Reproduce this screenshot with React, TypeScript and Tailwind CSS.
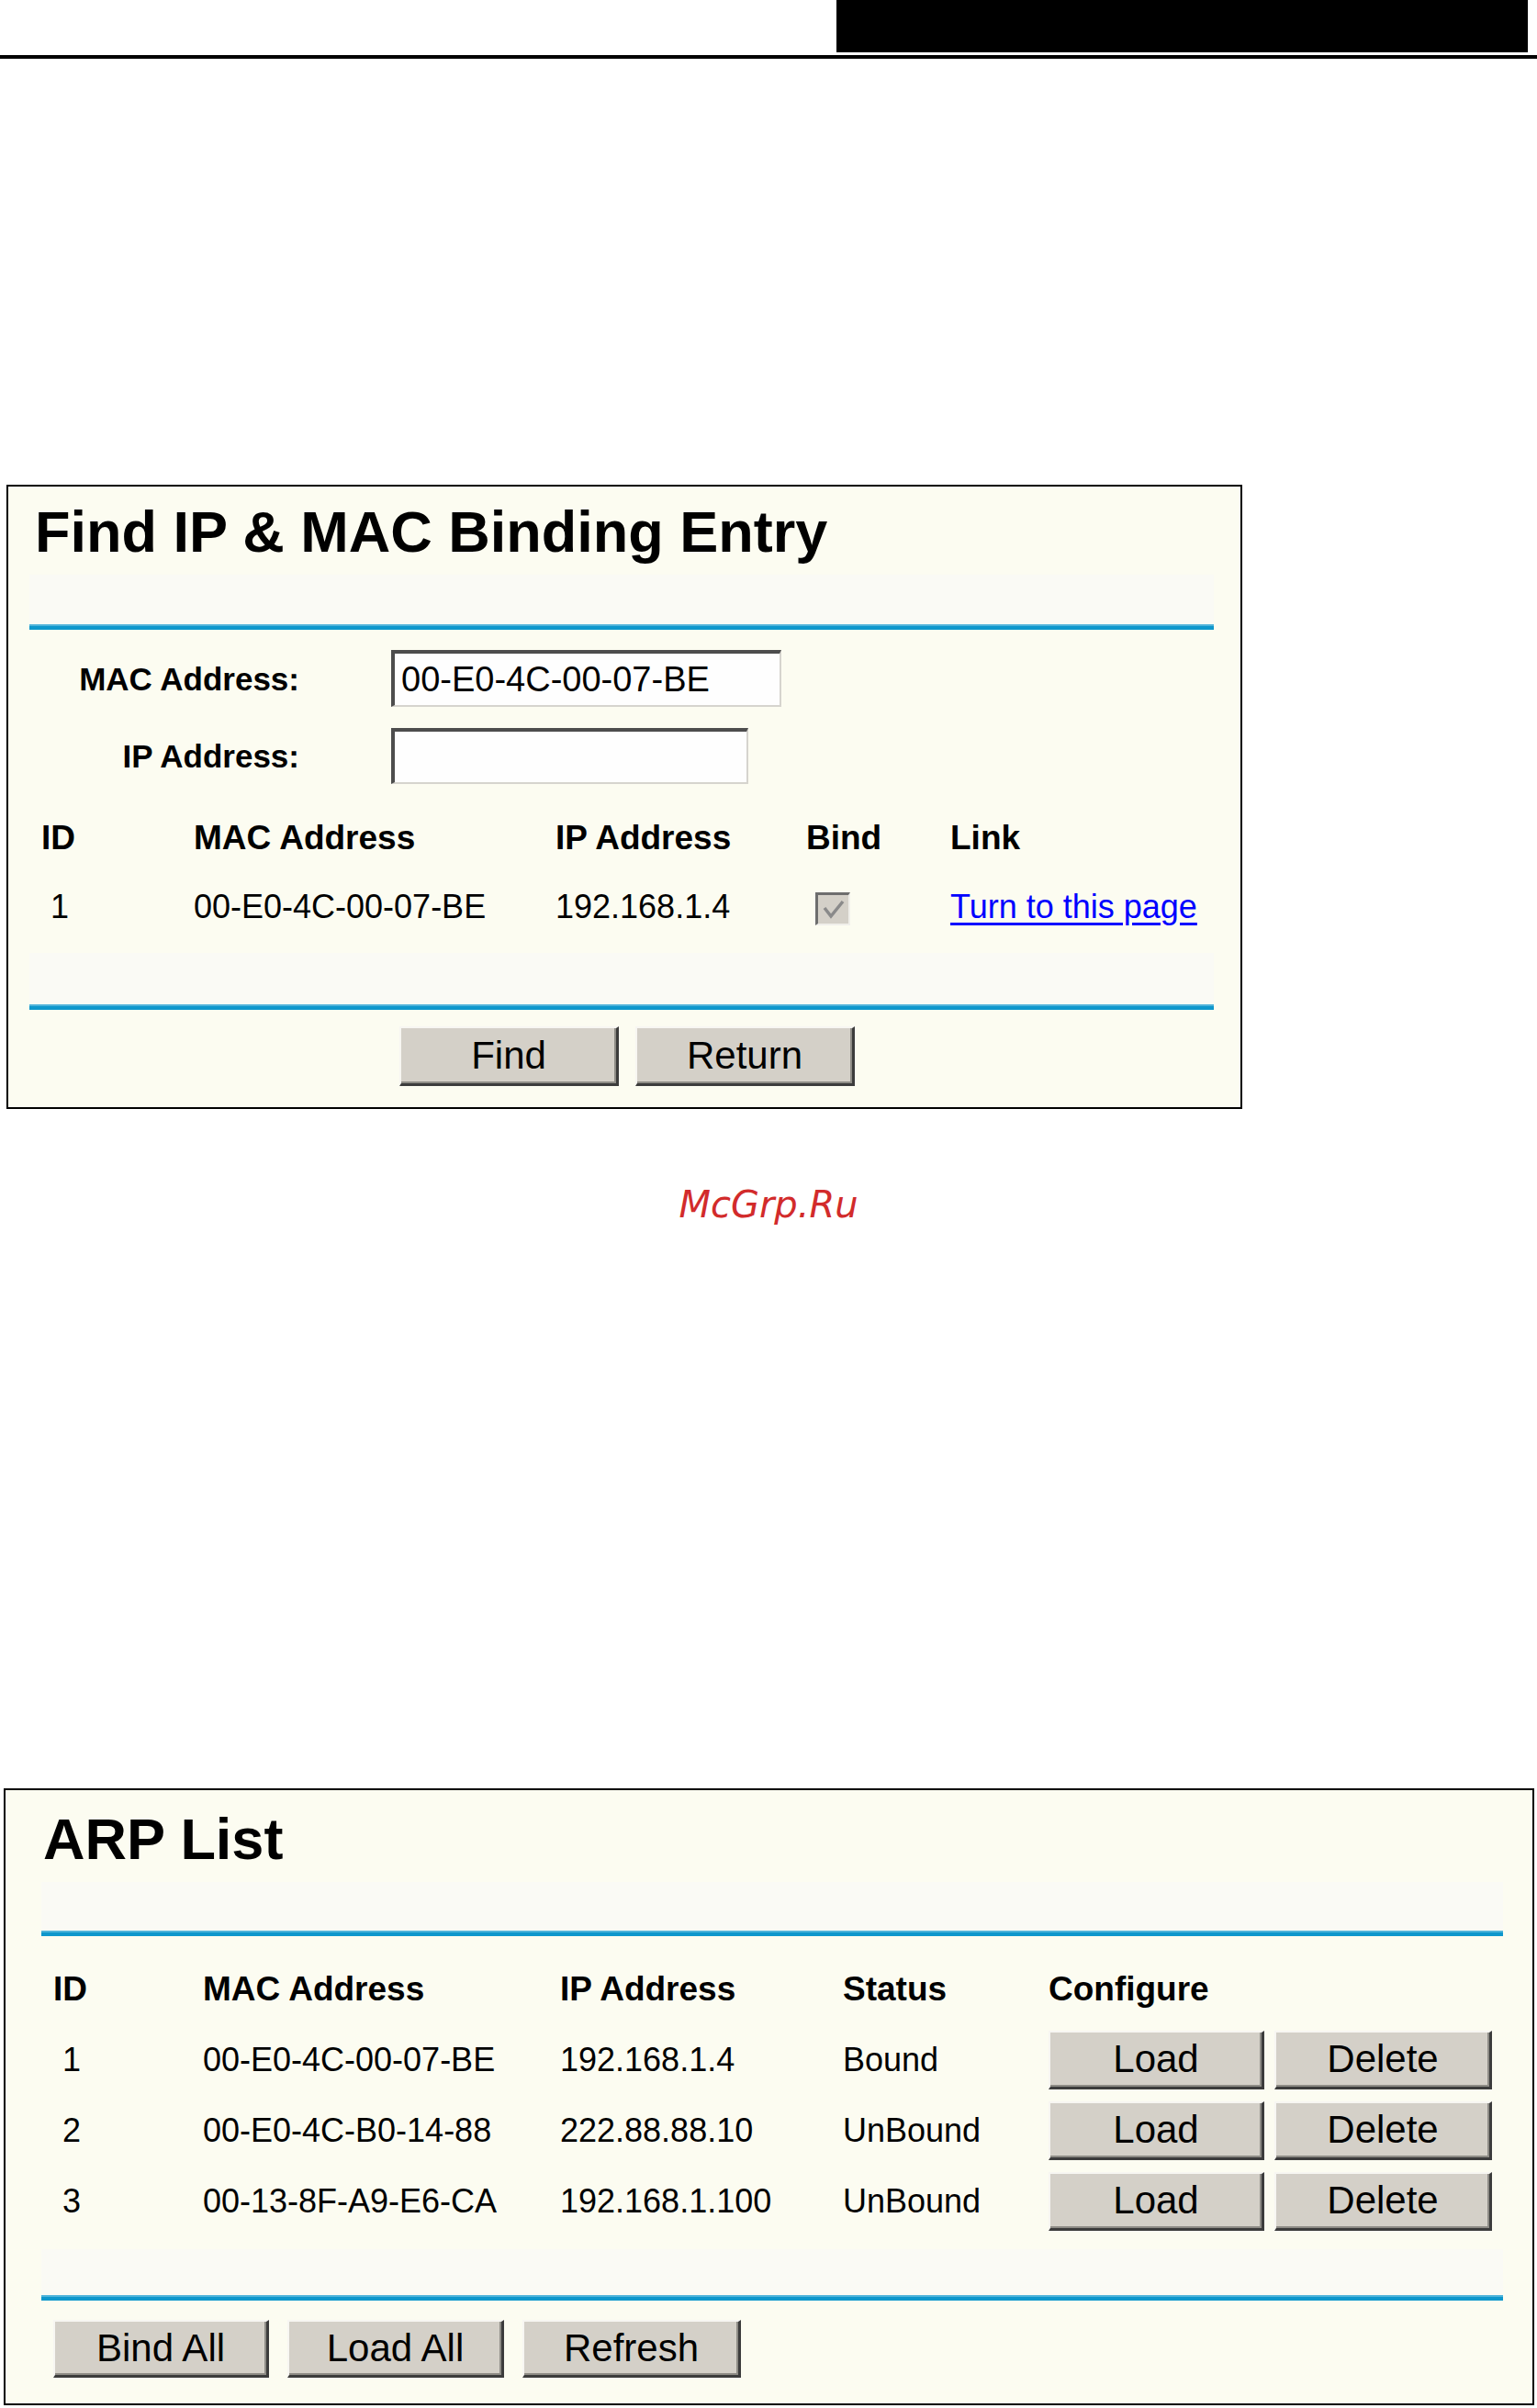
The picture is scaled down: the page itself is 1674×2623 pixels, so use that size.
import clsx from "clsx";

type ArpEntry = { id: number; mac: string; ip: string; status: string };

const arpEntries: ArpEntry[] = [
  { id: 1, mac: "00-E0-4C-00-07-BE", ip: "192.168.1.4", status: "Bound" },
  { id: 2, mac: "00-E0-4C-B0-14-88", ip: "222.88.88.10", status: "UnBound" },
  { id: 3, mac: "00-13-8F-A9-E6-CA", ip: "192.168.1.100", status: "UnBound" },
];

// classic raised grey button
function WinButton({ label, className }: { label: string; className?: string }) {
  return (
    <button
      type="button"
      className={clsx(
        "flex items-center justify-center bg-[#d4d0c8] text-[42px] leading-none text-black border-t-2 border-l-2 border-t-[#f7f6f2] border-l-[#f7f6f2] border-r-[3px] border-b-[3px] border-r-[#3c3c3c] border-b-[#3c3c3c] shadow-[inset_-2px_-2px_0_#8e8c86]",
        className
      )}
    >
      {label}
    </button>
  );
}

// sunken text field
function Field({ value, width }: { value: string; width: string }) {
  return (
    <input
      readOnly
      value={value}
      className={clsx(
        "h-full bg-[#fefefe] pl-[7px] text-[38px] leading-none text-black outline-none border-t-4 border-l-4 border-t-[#4d4d4d] border-l-[#4d4d4d] border-r-2 border-b-2 border-r-[#d6d4ce] border-b-[#d6d4ce]",
        width
      )}
    />
  );
}

function DisabledCheck() {
  return (
    <span className="ml-[10px] mt-[4px] flex h-[36px] w-[38px] items-center justify-center bg-[#d4d0c8] border-t-[3px] border-l-[3px] border-t-[#6e6e6e] border-l-[#6e6e6e] border-r-2 border-b-2 border-r-[#f0efea] border-b-[#f0efea]">
      <svg width="26" height="24" viewBox="0 0 26 24">
        <path d="M3 10 L10 19 L23 3" fill="none" stroke="#8a8a8a" strokeWidth="3.5" />
      </svg>
    </span>
  );
}

function BlueRule() {
  return <div className="h-[6px] bg-[#0e97cc] border-t-2 border-t-[#4fb3da]" />;
}

function FindPanel() {
  return (
    <section className="ml-[7px] mt-[464px] w-[1346px] border-2 border-black bg-[#fcfcf1] pl-[23px] pr-[29px] pb-[23px]">
      <h1 className="ml-[6px] mt-[18px] text-[63px] font-bold leading-none text-black">
        Find IP &amp; MAC Binding Entry
      </h1>
      <div className="mt-[15px] h-[54px] bg-[#fafaf5]" />
      <BlueRule />

      <div className="mt-[22px] flex h-[62px] items-center">
        <label className="w-[294px] text-right text-[35px] font-bold leading-none">MAC Address:</label>
        <div className="ml-[100px] h-full">
          <Field value="00-E0-4C-00-07-BE" width="w-[425px]" />
        </div>
      </div>
      <div className="mt-[23px] flex h-[61px] items-center">
        <label className="w-[294px] text-right text-[35px] font-bold leading-none">IP Address:</label>
        <div className="ml-[100px] h-full">
          <Field value="" width="w-[389px]" />
        </div>
      </div>

      <div className="mt-[20px] grid grid-cols-[179px_394px_273px_157px_1fr] text-[36px] leading-none">
        <div className="flex h-[76px] items-center pl-[13px] text-[37px] font-bold">ID</div>
        <div className="flex h-[76px] items-center text-[37px] font-bold">MAC Address</div>
        <div className="flex h-[76px] items-center text-[37px] font-bold">IP Address</div>
        <div className="flex h-[76px] items-center text-[37px] font-bold">Bind</div>
        <div className="flex h-[76px] items-center text-[37px] font-bold">Link</div>

        <div className="flex h-[76px] items-center pl-[13px]">
          <span className="w-[40px] text-center">1</span>
        </div>
        <div className="flex h-[76px] items-center">00-E0-4C-00-07-BE</div>
        <div className="flex h-[76px] items-center">192.168.1.4</div>
        <div className="flex h-[76px] items-center">
          <DisabledCheck />
        </div>
        <div className="flex h-[76px] items-center">
          <a href="#" className="text-[#0000ff] underline underline-offset-[5px]">
            Turn to this page
          </a>
        </div>
      </div>

      <div className="mt-[12px] h-[56px] bg-[#fafaf5]" />
      <BlueRule />

      <div className="mt-[18px] flex justify-center gap-[18px] pl-[12px]">
        <WinButton label="Find" className="h-[65px] w-[239px]" />
        <WinButton label="Return" className="h-[65px] w-[239px]" />
      </div>
    </section>
  );
}

function ArpPanel() {
  return (
    <section className="ml-[4px] mt-[616px] w-[1667px] border-2 border-black bg-[#fcfcf1] pl-[39px] pr-[32px] pb-[28px]">
      <h1 className="ml-[2px] mt-[22px] text-[63px] font-bold leading-none text-black">ARP List</h1>
      <div className="mt-[15px] h-[53px] bg-[#fafaf5]" />
      <BlueRule />

      <div className="mt-[19px] grid grid-cols-[176px_389px_308px_224px_1fr] text-[36px] leading-none">
        <div className="flex h-[77px] items-center pl-[13px] text-[37px] font-bold">ID</div>
        <div className="flex h-[77px] items-center text-[37px] font-bold">MAC Address</div>
        <div className="flex h-[77px] items-center text-[37px] font-bold">IP Address</div>
        <div className="flex h-[77px] items-center text-[37px] font-bold">Status</div>
        <div className="flex h-[77px] items-center text-[37px] font-bold">Configure</div>

        {arpEntries.map((e) => (
          <div key={e.id} className="contents">
            <div className="flex h-[77px] items-center pl-[13px]">
              <span className="w-[40px] text-center">{e.id}</span>
            </div>
            <div className="flex h-[77px] items-center">{e.mac}</div>
            <div className="flex h-[77px] items-center">{e.ip}</div>
            <div className="flex h-[77px] items-center">{e.status}</div>
            <div className="flex h-[77px] items-center gap-[11px]">
              <WinButton label="Load" className="h-[64px] w-[235px]" />
              <WinButton label="Delete" className="h-[64px] w-[237px]" />
            </div>
          </div>
        ))}
      </div>

      <div className="mt-[14px] h-[50px] bg-[#fafaf5]" />
      <BlueRule />

      <div className="ml-[13px] mt-[21px] flex gap-[20px]">
        <WinButton label="Bind All" className="h-[63px] w-[235px]" />
        <WinButton label="Load All" className="h-[63px] w-[236px]" />
        <WinButton label="Refresh" className="h-[63px] w-[238px]" />
      </div>
    </section>
  );
}

export default function App() {
  return (
    <div className="relative h-[2623px] w-[1674px] overflow-hidden bg-white font-['Liberation_Sans',Arial,sans-serif] text-black">
      <header>
        <div className="flex justify-end pr-[10px]">
          <div className="h-[57px] w-[753px] bg-black" />
        </div>
        <div className="mt-[3px] h-[4px] bg-black" />
      </header>

      <FindPanel />

      <p className="mt-[84px] text-center font-['DejaVu_Sans',sans-serif] text-[40px] italic leading-none text-[#d22b2b]">
        McGrp.Ru
      </p>

      <ArpPanel />
    </div>
  );
}
